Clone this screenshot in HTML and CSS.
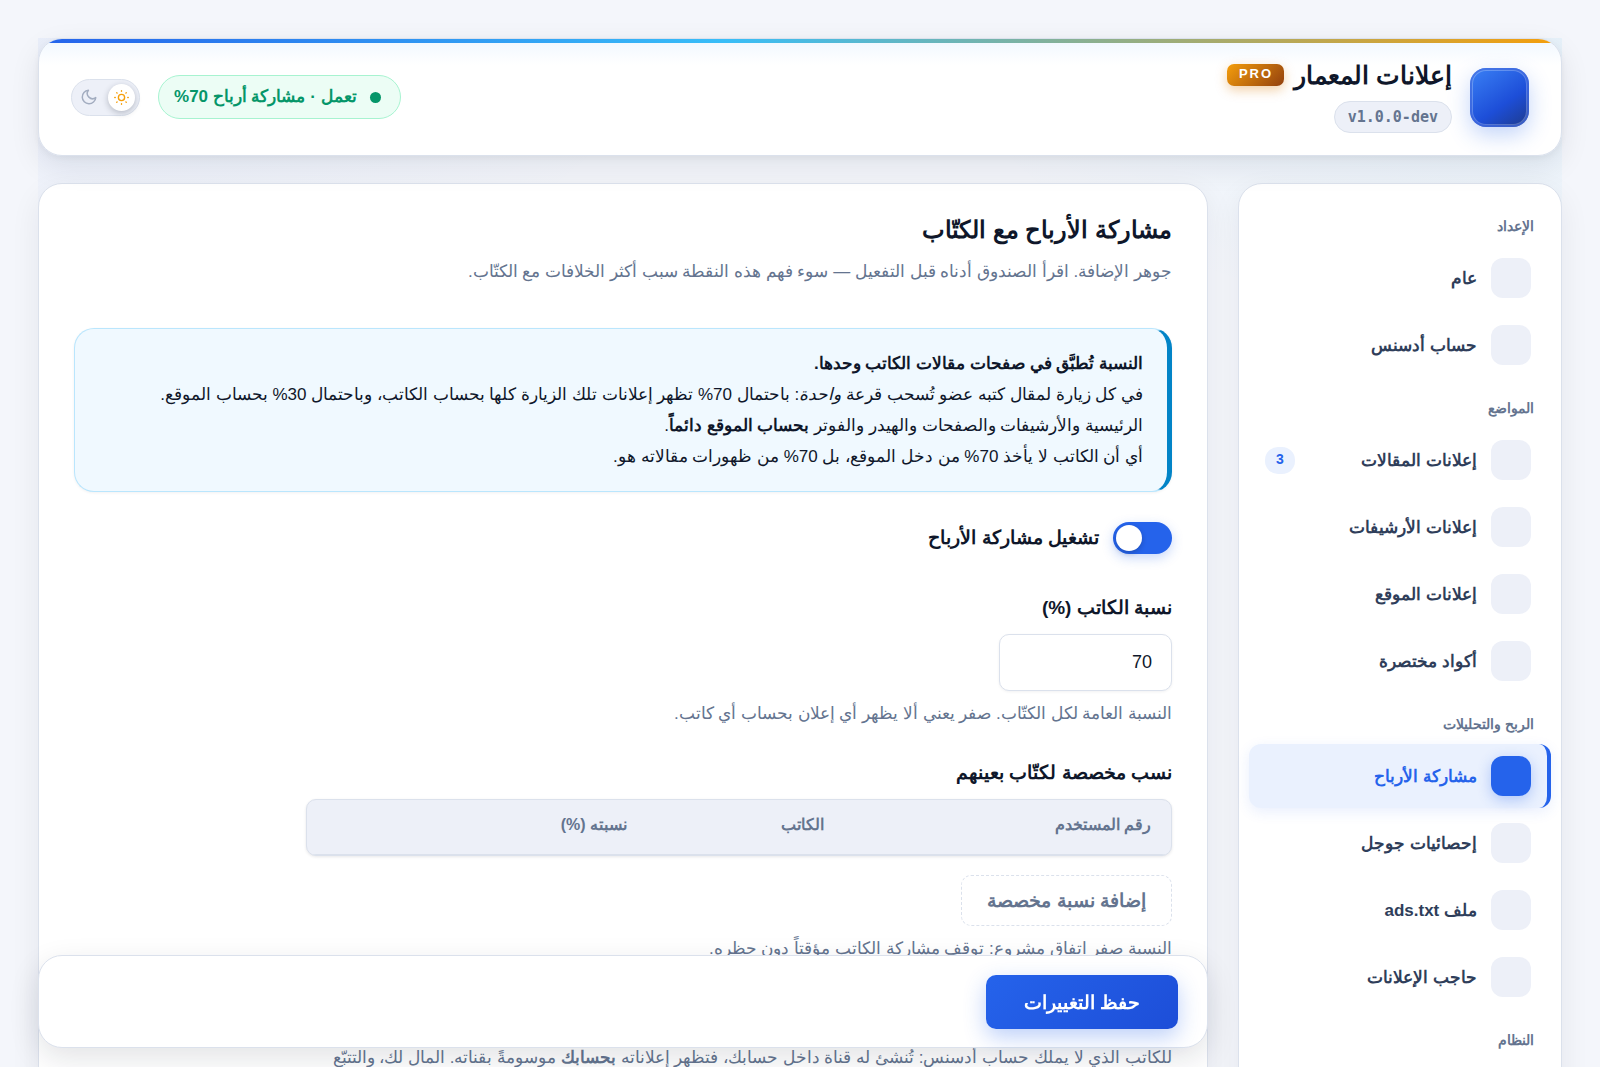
FILE: index.html
```html
<!DOCTYPE html>
<html lang="ar" dir="rtl">
<head>
    <meta charset="UTF-8">
    <meta name="viewport" content="width=device-width, initial-scale=1">
    <title>إعلانات المعمار</title>
    <link rel="stylesheet" href="styles.css">
</head>
<body>
    <div class="page">
        <div class="wrap">
            <header class="header">
                <div class="brand">
                    <span class="brand-icon"></span>
                    <div class="brand-text">
                        <h1>إعلانات المعمار <span class="pro">PRO</span></h1>
                        <span class="version" dir="ltr">v1.0.0-dev</span>
                    </div>
                </div>
                <div class="header-tools">
                    <span class="status"><i class="dot"></i>تعمل · مشاركة أرباح 70%</span>
                    <button type="button" class="theme" aria-label="الوضع الليلي">
                        <span class="theme-knob">
                            <svg viewBox="0 0 24 24" width="15" height="15" fill="none" stroke="currentColor" stroke-width="2.2" stroke-linecap="round">
                                <circle cx="12" cy="12" r="5"/>
                                <path d="M12 1.2v.8M12 22v.8M4.4 4.4l.6.6M19 19l.6.6M1.2 12H2M22 12h.8M4.4 19.6l.6-.6M19 5l.6-.6"/>
                            </svg>
                        </span>
                        <svg class="moon" viewBox="0 0 24 24" width="18" height="18" fill="none" stroke="currentColor" stroke-width="2" stroke-linecap="round" stroke-linejoin="round">
                            <path d="M21 12.8A9 9 0 1 1 11.2 3a7 7 0 0 0 9.8 9.8z"/>
                        </svg>
                    </button>
                </div>
            </header>

            <div class="layout">
                <nav class="sidebar">
                    <p class="nav-title">الإعداد</p>
                    <a href="#general" class="nav-item"><i></i>عام</a>
                    <a href="#adsense" class="nav-item"><i></i>حساب أدسنس</a>

                    <p class="nav-title">المواضع</p>
                    <a href="#posts" class="nav-item"><i></i>إعلانات المقالات <b class="count">3</b></a>
                    <a href="#archives" class="nav-item"><i></i>إعلانات الأرشيفات</a>
                    <a href="#site" class="nav-item"><i></i>إعلانات الموقع</a>
                    <a href="#shortcodes" class="nav-item"><i></i>أكواد مختصرة</a>

                    <p class="nav-title">الربح والتحليلات</p>
                    <a href="#revenue" class="nav-item active"><i></i>مشاركة الأرباح</a>
                    <a href="#analytics" class="nav-item"><i></i>إحصائيات جوجل</a>
                    <a href="#adstxt" class="nav-item"><i></i>ملف ads.txt</a>
                    <a href="#adblock" class="nav-item"><i></i>حاجب الإعلانات</a>

                    <p class="nav-title">النظام</p>
                </nav>

                <form class="content">
                    <section class="panel">
                        <h2>مشاركة الأرباح مع الكتّاب</h2>
                        <p class="desc">جوهر الإضافة. اقرأ الصندوق أدناه قبل التفعيل — سوء فهم هذه النقطة سبب أكثر الخلافات مع الكتّاب.</p>

                        <div class="note">
                            <strong>النسبة تُطبَّق في صفحات مقالات الكاتب وحدها.</strong><br>
                            في كل زيارة لمقال كتبه عضو تُسحب قرعة <em>واحدة</em>: باحتمال 70% تظهر إعلانات تلك الزيارة كلها بحساب الكاتب، وباحتمال 30% بحساب الموقع.<br>
                            الرئيسية والأرشيفات والصفحات والهيدر والفوتر <strong>بحساب الموقع دائماً</strong>.<br>
                            أي أن الكاتب لا يأخذ 70% من دخل الموقع، بل 70% من ظهورات مقالاته هو.
                        </div>

                        <label class="switch">
                            <input type="checkbox" checked>
                            <span class="track"></span>
                            تشغيل مشاركة الأرباح
                        </label>

                        <div class="field">
                            <label class="field-label" for="share">نسبة الكاتب (%)</label>
                            <input type="text" inputmode="numeric" id="share" class="input" value="70">
                            <p class="help">النسبة العامة لكل الكتّاب. صفر يعني ألا يظهر أي إعلان بحساب أي كاتب.</p>
                        </div>

                        <div class="field">
                            <h3 class="field-label" id="custom-title">نسب مخصصة لكتّاب بعينهم</h3>
                            <table class="table" aria-labelledby="custom-title">
                                <thead>
                                    <tr>
                                        <th class="col-id">رقم المستخدم</th>
                                        <th class="col-name">الكاتب</th>
                                        <th>نسبته (%)</th>
                                    </tr>
                                </thead>
                            </table>
                            <button type="button" class="add">إضافة نسبة مخصصة</button>
                            <p class="help">النسبة صفر اتفاق مشروع: توقف مشاركة الكاتب مؤقتاً دون حظره.</p>
                        </div>

                        <div class="field channels">
                            <p class="help">للكاتب الذي لا يملك حساب أدسنس: تُنشئ له قناة داخل حسابك، فتظهر إعلاناته <strong>بحسابك</strong> موسومةً بقناته. المال لك، والتتبّع</p>
                        </div>
                    </section>

                    <div class="savebar">
                        <button type="submit" class="save">حفظ التغييرات</button>
                    </div>
                </form>
            </div>
        </div>
    </div>
</body>
</html>
```

FILE: styles.css
```css
* {
    box-sizing: border-box;
}
body {
    margin: 0;
    background: #f4f6fb;
    color: #0f172a;
    font-family: "Liberation Sans", system-ui;
    font-size: 17px;
    line-height: 31px;
}
h1, h2, h3, p {
    margin: 0;
}
button, input {
    font-family: inherit;
}
.page {
    height: 100vh;
    padding: 38px 38px 0;
    overflow: hidden;
}
.wrap {
    background:
        radial-gradient(900px 420px at 100% 0, rgba(14, 165, 233, 0.06), transparent 70%),
        radial-gradient(900px 420px at 0 0, rgba(37, 99, 235, 0.05), transparent 70%);
}

/* header */
.header {
    position: relative;
    display: flex;
    align-items: center;
    justify-content: space-between;
    height: 118px;
    margin-bottom: 27px;
    padding: 0 32px;
    background: linear-gradient(180deg, #f0f7ff, #fff 26px);
    border: 1px solid #dbe1ec;
    border-radius: 24px;
    box-shadow: 0 10px 30px rgba(15, 23, 42, 0.09), 0 2px 6px rgba(15, 23, 42, 0.05);
    overflow: hidden;
}
.header::before {
    content: "";
    position: absolute;
    top: 0;
    left: 0;
    right: 0;
    height: 4px;
    background: linear-gradient(90deg, #2563eb, #38bdf8 45%, #f59e0b);
}
.brand {
    display: flex;
    align-items: center;
    gap: 18px;
}
.brand-icon {
    width: 59px;
    height: 59px;
    border-radius: 16px;
    background: linear-gradient(145deg, #3b82f6, #1d4ed8 60%, #1e3a8a);
    box-shadow: inset 0 0 0 2px rgba(29, 78, 216, 0.5), inset 0 0 0 3px rgba(255, 255, 255, 0.25), 0 8px 22px rgba(37, 99, 235, 0.28);
}
.brand-text {
    padding-bottom: 6px;
}
.brand-text h1 {
    display: flex;
    align-items: center;
    gap: 10px;
    font-size: 25px;
    line-height: 38px;
    margin-bottom: 7px;
}
.pro {
    padding: 0 11px 2px 12px;
    border-radius: 7px;
    background: linear-gradient(135deg, #f59e0b, #92400e);
    box-shadow: 0 4px 12px rgba(217, 119, 6, 0.35);
    color: #fff;
    font-size: 13px;
    line-height: 20px;
    letter-spacing: 2px;
}
.version {
    display: block;
    width: fit-content;
    padding: 0 13px;
    background: #edf0f8;
    border: 1px solid #dbe1ec;
    border-radius: 16px;
    color: #64748f;
    font: bold 15px/30px "DejaVu Sans Mono", monospace;
}
.header-tools {
    display: flex;
    align-items: center;
    gap: 18px;
}
.status {
    display: flex;
    align-items: center;
    gap: 13px;
    padding: 0 19px 0 15px;
    border: 1px solid #a7f3d0;
    border-radius: 22px;
    background: #ecfdf5;
    color: #059669;
    font-size: 17px;
    font-weight: bold;
    line-height: 42px;
}
.dot {
    width: 11px;
    height: 11px;
    border-radius: 50%;
    background: #059669;
}
.theme {
    display: flex;
    align-items: center;
    justify-content: space-between;
    width: 69px;
    height: 37px;
    padding: 0 4px 0 8px;
    border: 1px solid #dbe1ec;
    border-radius: 19px;
    background: #edf0f8;
    color: #a3adc0;
    cursor: pointer;
}
.theme-knob {
    display: flex;
    align-items: center;
    justify-content: center;
    width: 27px;
    height: 27px;
    border-radius: 50%;
    background: #fff;
    box-shadow: 0 2px 6px rgba(15, 23, 42, 0.25);
    color: #f59e0b;
}

/* columns */
.layout {
    display: grid;
    grid-template-columns: 324px minmax(0, 1fr);
    gap: 30px;
}
.sidebar, .panel {
    background: #fff;
    border: 1px solid #dbe1ec;
    border-radius: 24px;
    box-shadow: 0 10px 30px rgba(15, 23, 42, 0.07);
}
.sidebar {
    padding: 10px;
}
.nav-title {
    padding: 14px 17px 6px;
    color: #64748f;
    font-size: 14px;
    font-weight: bold;
    line-height: 28px;
}
.nav-title:first-child {
    padding-top: 18px;
}
.nav-item {
    display: flex;
    align-items: center;
    gap: 14px;
    height: 64px;
    margin-bottom: 3px;
    padding: 0 16px;
    border-right: 4px solid transparent;
    border-radius: 12px;
    color: #2f3e5a;
    font-weight: bold;
    text-decoration: none;
}
.nav-item i {
    width: 40px;
    height: 40px;
    border-radius: 12px;
    background: #edf0f8;
}
.nav-item.active {
    border-right-color: #2563eb;
    background: #eaf1fe;
    box-shadow: 0 4px 14px rgba(37, 99, 235, 0.1);
    color: #2563eb;
}
.nav-item.active i {
    background: #2563eb;
    box-shadow: 0 4px 14px rgba(37, 99, 235, 0.3);
}
.count {
    margin-right: auto;
    padding: 0 11px 2px;
    border-radius: 13px;
    background: #eaf1fe;
    color: #2563eb;
    font-size: 14px;
    line-height: 25px;
}

/* settings panel */
.content {
    display: flex;
    flex-direction: column;
}
.panel {
    padding: 28px 35px 140px;
}
.panel h2 {
    font-size: 24px;
    line-height: 36px;
}
.desc {
    margin: 8px 0 41px;
    color: #64748f;
}
.note {
    margin-bottom: 30px;
    padding: 19px 24px;
    border: 1px solid #bae6fd;
    border-right: 5px solid #0284c7;
    border-radius: 20px;
    background: #f0f9ff;
    box-shadow: 0 1px 3px rgba(15, 23, 42, 0.06);
}
.switch {
    display: flex;
    align-items: center;
    gap: 14px;
    width: fit-content;
    font-size: 19px;
    font-weight: bold;
    line-height: 32px;
    cursor: pointer;
}
.switch input {
    position: absolute;
    opacity: 0;
}
.track {
    display: flex;
    align-items: center;
    justify-content: flex-end;
    width: 59px;
    height: 32px;
    padding: 0 3px;
    border-radius: 16px;
    background: #2563eb;
    box-shadow: 0 4px 12px rgba(37, 99, 235, 0.25);
}
.track::after {
    content: "";
    width: 26px;
    height: 26px;
    border-radius: 50%;
    background: #fff;
    box-shadow: 0 2px 5px rgba(15, 23, 42, 0.25);
}
.field {
    max-width: 866px;
    margin-top: 28px;
}
.switch + .field {
    margin-top: 38px;
}
.field-label {
    display: block;
    margin-bottom: 10px;
    font-size: 19px;
    line-height: 32px;
}
label.field-label {
    font-weight: bold;
}
.input {
    display: block;
    width: 173px;
    height: 57px;
    padding: 0 19px;
    border: 1px solid #dbe1ec;
    border-radius: 10px;
    background: #fff;
    box-shadow: 0 1px 3px rgba(15, 23, 42, 0.06);
    color: #0f172a;
    font-size: 18px;
}
.help {
    margin-top: 7px;
    color: #64748f;
}
.table {
    width: 100%;
    border: 1px solid #dbe1ec;
    border-radius: 10px;
    border-spacing: 0;
    background: #edf0f8;
    box-shadow: 0 1px 3px rgba(15, 23, 42, 0.1);
    overflow: hidden;
}
.table th {
    padding: 10px 20px 15px;
    border-bottom: 1px solid #dbe1ec;
    color: #64748f;
    font-size: 16px;
    line-height: 29px;
    text-align: right;
}
.col-id {
    width: 327px;
}
.col-name {
    width: 197px;
}
.add {
    margin-top: 19px;
    padding: 0 25px;
    border: 1px dashed #dbe1ec;
    border-radius: 10px;
    background: #fff;
    color: #64748f;
    font-size: 19px;
    font-weight: bold;
    line-height: 49px;
    cursor: pointer;
}
.channels {
    margin-top: 78px;
}

/* save bar */
.savebar {
    position: sticky;
    bottom: 19px;
    padding: 19px 29px 18px;
    background: #fff;
    border: 1px solid #dbe1ec;
    border-radius: 24px;
    box-shadow: 0 10px 30px rgba(15, 23, 42, 0.12);
}
.save {
    display: block;
    height: 54px;
    padding: 0 38px;
    border: 0;
    border-radius: 10px;
    background: linear-gradient(315deg, #1d4ed8, #2563eb);
    box-shadow: 0 8px 22px rgba(37, 99, 235, 0.3);
    color: #fff;
    font-size: 19px;
    font-weight: bold;
    cursor: pointer;
}
```
